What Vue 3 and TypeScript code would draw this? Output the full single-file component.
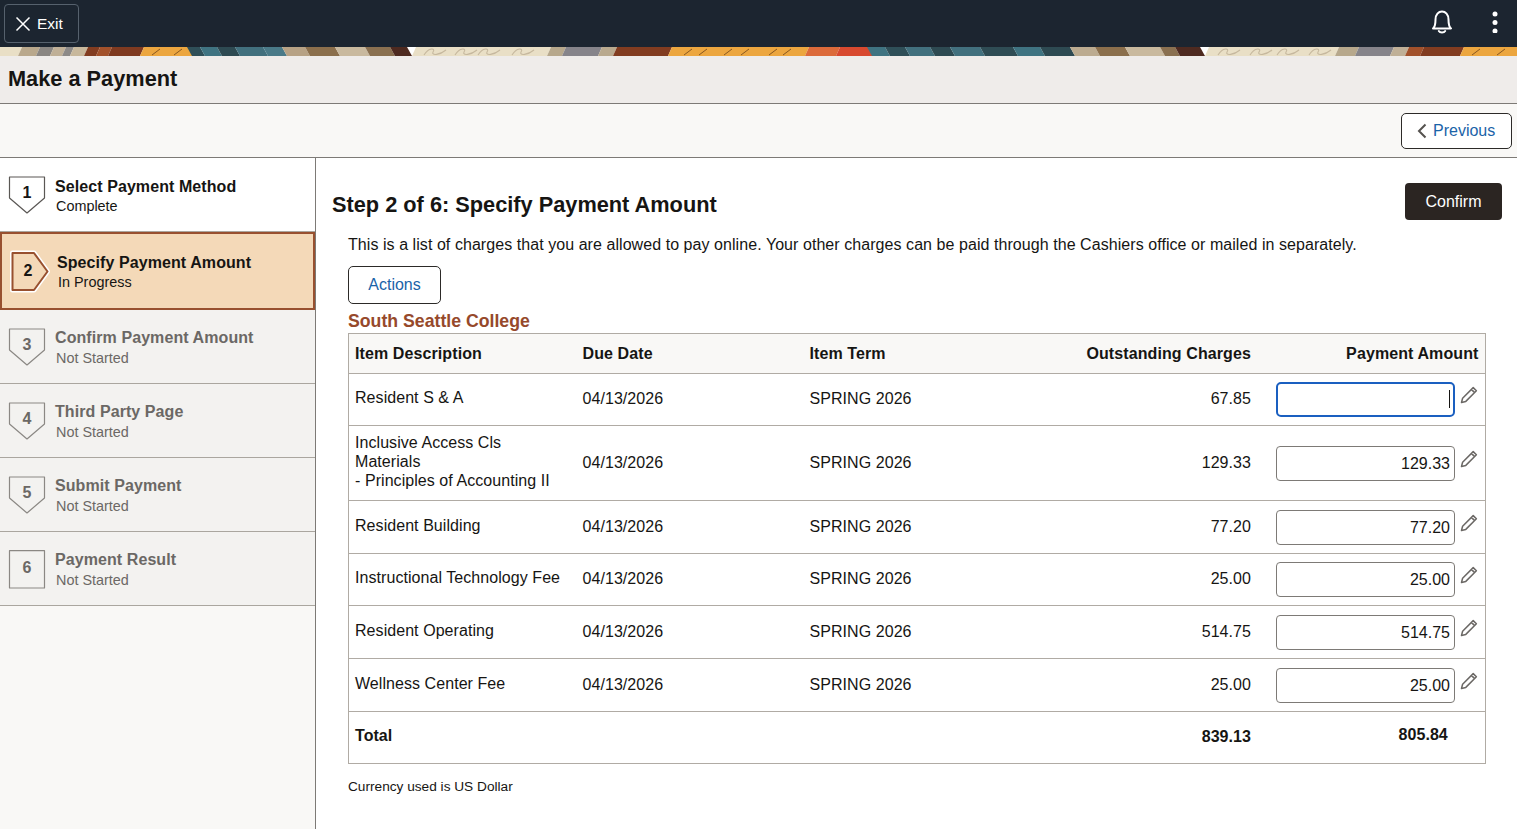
<script setup lang="ts">
interface Step {
  num: number;
  title: string;
  status: string;
  state: 'done' | 'active' | 'todo';
}

interface Charge {
  desc: string[];
  amount: string;
  value: string;
  focused?: boolean;
  height: number;
}

const steps: Step[] = [
  { num: 1, title: 'Select Payment Method', status: 'Complete', state: 'done' },
  { num: 2, title: 'Specify Payment Amount', status: 'In Progress', state: 'active' },
  { num: 3, title: 'Confirm Payment Amount', status: 'Not Started', state: 'todo' },
  { num: 4, title: 'Third Party Page', status: 'Not Started', state: 'todo' },
  { num: 5, title: 'Submit Payment', status: 'Not Started', state: 'todo' },
  { num: 6, title: 'Payment Result', status: 'Not Started', state: 'todo' },
];

const charges: Charge[] = [
  { desc: ['Resident S & A'], amount: '67.85', value: '', focused: true, height: 52 },
  {
    desc: ['Inclusive Access Cls', 'Materials', '- Principles of Accounting II'],
    amount: '129.33',
    value: '129.33',
    height: 75,
  },
  { desc: ['Resident Building'], amount: '77.20', value: '77.20', height: 53 },
  { desc: ['Instructional Technology Fee'], amount: '25.00', value: '25.00', height: 52 },
  { desc: ['Resident Operating'], amount: '514.75', value: '514.75', height: 53 },
  { desc: ['Wellness Center Fee'], amount: '25.00', value: '25.00', height: 53 },
];

// banner strip: [start x, end x, colour]
const bannerBands: [number, number, string][] = [
  [-8, 18, '#e9dfc6'],
  [18, 36, '#b9a88c'],
  [36, 50, '#8a8682'],
  [50, 62, '#c0b097'],
  [62, 70, '#8d8a88'],
  [70, 84, '#c8b89c'],
  [84, 96, '#823c20'],
  [96, 108, '#a2512b'],
  [108, 140, '#7f3a20'],
  [140, 195, '#eca63f'],
  [192, 205, '#2f4f58'],
  [205, 222, '#3f7381'],
  [222, 240, '#2e4a52'],
  [240, 268, '#42707e'],
  [268, 287, '#4a7a88'],
  [287, 310, '#b7a285'],
  [310, 340, '#8b6f4c'],
  [340, 370, '#c9b99e'],
  [370, 395, '#8a7050'],
  [395, 412, '#4e2a20'],
  [412, 547, '#e9dfc6'],
  [547, 562, '#b7a88c'],
  [562, 598, '#86848a'],
  [598, 613, '#b9a98e'],
  [613, 668, '#823c20'],
  [668, 805, '#eca63f'],
  [805, 836, '#dc6a3a'],
  [836, 875, '#d8492f'],
  [872, 890, '#3f7381'],
  [890, 910, '#2f4f58'],
  [910, 935, '#42707e'],
  [935, 955, '#2e4a52'],
  [955, 985, '#42707e'],
  [985, 1018, '#2f4c54'],
  [1018, 1045, '#3f7381'],
  [1045, 1075, '#2e4a52'],
  [1075, 1100, '#bcab90'],
  [1100, 1130, '#8b6f4c'],
  [1130, 1165, '#c9b99e'],
  [1165, 1180, '#8a7050'],
  [1180, 1205, '#4e2a20'],
  [1205, 1335, '#e9dfc6'],
  [1335, 1355, '#b7a88c'],
  [1355, 1390, '#86848a'],
  [1390, 1405, '#c0b097'],
  [1405, 1420, '#a2512b'],
  [1420, 1460, '#823c20'],
  [1460, 1525, '#eca63f'],
];

const squiggleStarts = [424, 455, 478, 512, 1218, 1250, 1277, 1309];
const tickStarts = [152, 174, 684, 699, 724, 741, 769, 783, 1472, 1497];

// the teal and tan runs lean the other way from the rust and orange ones
const bandPoints = (band: [number, number, string]) => {
  const [a, b] = band;
  const back = (a >= 192 && a < 412) || (a >= 872 && a < 1205);
  const lean = back ? -5 : 4;
  return `${a + lean},0 ${b + lean},0 ${b},9 ${a},9`;
};

const stepShape = (state: Step['state'], num: number) => {
  if (state === 'active') {
    return 'M3.5 3H25L38.5 21.5L25 40H3.5Z';
  }
  if (num === 6) {
    return 'M1.5 1.7H36.5V39H1.5Z';
  }
  return 'M1.5 2H36.5V23L19 38L1.5 23Z';
};

const numberY = (state: Step['state'], num: number) => {
  if (state === 'active') return 22;
  return num === 6 ? 20 : 19;
};
</script>

<template>
  <div class="page">
    <header class="topbar">
      <button class="exit-btn" type="button">
        <svg width="16" height="16" viewBox="0 0 16 16" fill="none">
          <path d="M1.5 1.5L14.5 14.5M14.5 1.5L1.5 14.5" stroke="#fff" stroke-width="1.5" />
        </svg>
        Exit
      </button>
      <div class="topbar-icons">
        <svg class="bell" width="20" height="24" viewBox="0 0 20 24" fill="none">
          <path
            d="M1 18.5C3.5 16.5 3.5 13.5 3.5 9.5C3.5 4.5 6.5 1.5 10 1.5C13.5 1.5 16.5 4.5 16.5 9.5C16.5 13.5 16.5 16.5 19 18.5Z"
            stroke="#fff"
            stroke-width="2"
            stroke-linejoin="round"
          />
          <path d="M6.8 21C8 23 12 23 13.2 21" stroke="#fff" stroke-width="2" stroke-linecap="round" />
        </svg>
        <svg class="kebab" width="6" height="22" viewBox="0 0 6 22" fill="#fff">
          <circle cx="3" cy="3" r="2.5" />
          <circle cx="3" cy="11.5" r="2.5" />
          <circle cx="3" cy="20" r="2.5" />
        </svg>
      </div>
    </header>

    <svg class="banner" viewBox="0 0 1517 9" preserveAspectRatio="none" aria-hidden="true">
      <polygon v-for="band in bannerBands" :key="band[0]" :points="bandPoints(band)" :fill="band[2]" />
      <path
        v-for="x in squiggleStarts"
        :key="'s' + x"
        :d="`M${x} 8C${x + 5} 0 ${x + 12} 1 ${x + 9} 5C${x + 7} 9 ${x + 16} 8 ${x + 22} 3`"
        fill="none"
        stroke="#c6b89e"
        stroke-width="1.1"
      />
      <path
        v-for="x in tickStarts"
        :key="'t' + x"
        :d="`M${x} 8L${x + 8} 2`"
        stroke="#7d4f1e"
        stroke-width="0.9"
      />
    </svg>

    <div class="title-bar">
      <h1>Make a Payment</h1>
    </div>

    <div class="toolbar">
      <button class="btn prev-btn" type="button">
        <svg width="10" height="16" viewBox="0 0 10 16" fill="none">
          <path d="M8.5 1.5L2 8L8.5 14.5" stroke="#55524f" stroke-width="2" />
        </svg>
        Previous
      </button>
    </div>

    <div class="body">
      <nav class="steps">
        <div v-for="step in steps" :key="step.num" class="step" :class="'step--' + step.state">
          <svg class="step-icon" width="40" height="40" viewBox="0 0 40 40">
            <path
              v-if="step.state === 'active'"
              :d="stepShape(step.state, step.num)"
              fill="none"
              stroke="#fff"
              stroke-width="5"
              stroke-linejoin="round"
            />
            <path
              :d="stepShape(step.state, step.num)"
              class="step-shape"
              stroke-linejoin="round"
            />
            <text
              x="19"
              :y="numberY(step.state, step.num)"
              class="step-num"
              text-anchor="middle"
              dominant-baseline="middle"
            >{{ step.num }}</text>
          </svg>
          <div class="step-text">
            <div class="step-title">{{ step.title }}</div>
            <div class="step-status">{{ step.status }}</div>
          </div>
        </div>
      </nav>

      <main class="content">
        <div class="content-head">
          <h2>Step 2 of 6: Specify Payment Amount</h2>
          <button class="confirm-btn" type="button">Confirm</button>
        </div>
        <div class="inner">
          <p class="intro">
            This is a list of charges that you are allowed to pay online. Your other charges can be paid through the
            Cashiers office or mailed in separately.
          </p>
          <button class="btn actions-btn" type="button">Actions</button>
          <h3>South Seattle College</h3>
          <table class="charges">
            <colgroup>
              <col style="width: 227px" />
              <col style="width: 227px" />
              <col style="width: 227px" />
              <col style="width: 228px" />
              <col />
            </colgroup>
            <thead>
              <tr>
                <th>Item Description</th>
                <th>Due Date</th>
                <th>Item Term</th>
                <th class="num">Outstanding Charges</th>
                <th class="num">Payment Amount</th>
              </tr>
            </thead>
            <tbody>
              <tr v-for="row in charges" :key="row.desc[0]" :style="{ height: row.height + 'px' }">
                <td class="desc">
                  <div v-for="line in row.desc" :key="line">{{ line }}</div>
                </td>
                <td>04/13/2026</td>
                <td>SPRING 2026</td>
                <td class="num">{{ row.amount }}</td>
                <td class="pay">
                  <div class="pay-wrap">
                    <div class="input-wrap">
                      <input
                        class="pay-input"
                        :class="{ 'is-focused': row.focused }"
                        type="text"
                        :value="row.value"
                        :aria-label="'Payment amount for ' + row.desc[0]"
                      />
                      <span v-if="row.focused" class="caret"></span>
                    </div>
                    <svg class="pencil" width="18" height="18" viewBox="0 0 18 18" fill="none">
                      <path
                        d="M1.5 16.5L2.6 12.2L13.2 1.6L16.4 4.8L5.8 15.4Z M11.4 3.4L14.6 6.6"
                        stroke="#6b6865"
                        stroke-width="1.5"
                        stroke-linejoin="round"
                      />
                    </svg>
                  </div>
                </td>
              </tr>
              <tr class="total">
                <td>Total</td>
                <td></td>
                <td></td>
                <td class="num total-charges">839.13</td>
                <td class="total-pay">805.84</td>
              </tr>
            </tbody>
          </table>
          <p class="currency">Currency used is US Dollar</p>
        </div>
      </main>
    </div>
  </div>
</template>

<style>
html,
body {
  margin: 0;
  background: #fff;
}
</style>

<style scoped>
.page {
  display: flex;
  flex-direction: column;
  height: 829px;
  overflow: hidden;
  font-family: 'Liberation Sans', Arial, sans-serif;
  font-size: 16px;
  color: #161513;
}

.topbar {
  display: flex;
  flex: none;
  align-items: center;
  justify-content: space-between;
  height: 47px;
  box-sizing: border-box;
  padding: 0 19px 3px 4px;
  background: #1c2530;
}

.exit-btn {
  display: flex;
  align-items: center;
  gap: 6px;
  width: 75px;
  height: 39px;
  box-sizing: border-box;
  padding: 0 0 0 10px;
  margin-top: 3px;
  border: 1px solid #56616d;
  border-radius: 4px;
  background: transparent;
  color: #fff;
  font: inherit;
  font-size: 15.5px;
}

.topbar-icons {
  display: flex;
  align-items: center;
  gap: 40px;
}

.banner {
  display: block;
  flex: none;
  width: 100%;
  height: 9px;
}

.title-bar {
  flex: none;
  height: 48px;
  box-sizing: border-box;
  padding: 9px 8px 0;
  border-bottom: 1px solid #7d7a76;
  background: #efecea;
}

h1 {
  margin: 0;
  font-size: 21.75px;
  line-height: 27px;
}

.toolbar {
  display: flex;
  flex: none;
  justify-content: flex-end;
  height: 54px;
  box-sizing: border-box;
  padding: 9px 5px 0 0;
  border-bottom: 1px solid #7d7a76;
  background: #f9f8f6;
}

.btn {
  border: 1px solid #2c2a28;
  border-radius: 5px;
  background: #fff;
  color: #1a63a8;
  font: inherit;
}

.prev-btn {
  display: flex;
  align-items: center;
  gap: 6px;
  width: 111px;
  height: 36px;
  padding: 0 0 0 15px;
}

.body {
  display: flex;
  flex: 1;
  min-height: 0;
}

.steps {
  flex: none;
  width: 316px;
  box-sizing: border-box;
  border-right: 1px solid #7d7a76;
  background: #f9f8f6;
}

.step {
  display: flex;
  align-items: flex-start;
  gap: 7px;
  height: 74px;
  box-sizing: border-box;
  padding: 17px 0 0 8px;
  border-bottom: 1px solid #aaa69f;
  background: #f3f2f0;
}

.step-icon {
  flex: none;
  overflow: visible;
}

.step-shape {
  fill: none;
  stroke: #8b8884;
  stroke-width: 1.2;
}

.step-num {
  fill: #6b6865;
  font-size: 16px;
  font-weight: 700;
}

.step-title {
  font-weight: 700;
  line-height: 22px;
  letter-spacing: 0.08px;
  color: #6b6865;
}

.step-status {
  margin-left: 1px;
  font-size: 14.4px;
  line-height: 18px;
  color: #6b6865;
}

.step--done {
  background: #fff;
}

.step--done .step-shape {
  fill: #fff;
  stroke: #5a5754;
}

.step--done .step-num,
.step--active .step-num {
  fill: #161513;
}

.step--done .step-title,
.step--done .step-status,
.step--active .step-title,
.step--active .step-status {
  color: #161513;
}

.step--done .step-text {
  margin-top: 1px;
}

.step--done .step-title {
  line-height: 21px;
}

.step--active {
  height: 78px;
  padding: 16px 0 0 7px;
  border: 2px solid #98502f;
  background: #f4d9b8;
  gap: 8px;
}

.step--active .step-text {
  margin-top: 2px;
}

.step--active .step-title {
  line-height: 21px;
}

.step--active .step-shape {
  fill: #f4d9b8;
  stroke: #98502f;
  stroke-width: 2;
}

.content {
  flex: 1;
  min-width: 0;
  padding-left: 16px;
}

.content-head {
  display: flex;
  align-items: flex-start;
  justify-content: space-between;
  padding: 25px 15px 0 0;
}

h2 {
  margin: 8px 0 0;
  font-size: 21.75px;
  line-height: 27px;
}

.confirm-btn {
  width: 97px;
  height: 37px;
  border: none;
  border-radius: 4px;
  background: #2b2522;
  color: #fff;
  font: inherit;
}

.inner {
  padding-left: 16px;
}

.intro {
  margin: 14px 0 0;
  line-height: 22px;
  letter-spacing: 0.06px;
}

.actions-btn {
  display: block;
  width: 93px;
  height: 38px;
  margin-top: 10px;
}

h3 {
  margin: 6px 0 0;
  font-size: 17.7px;
  line-height: 23px;
  color: #96492b;
}

.charges {
  width: 1138px;
  border: 1px solid #b0aba4;
  border-collapse: collapse;
  table-layout: fixed;
}

.charges th,
.charges td {
  padding: 0 7px;
  text-align: left;
  font-weight: 400;
  line-height: 21px;
  border-bottom: 1px solid #b0aba4;
}

.charges td {
  padding-bottom: 2px;
  letter-spacing: 0.06px;
}

.charges th:first-child,
.charges td:first-child {
  padding-left: 6px;
}

.charges th {
  height: 39px;
  background: #f9f8f6;
  font-weight: 700;
  letter-spacing: 0.1px;
}

.charges .num {
  padding-right: 6.5px;
  text-align: right;
}

.charges .desc div {
  position: relative;
  top: -1px;
  line-height: 19px;
}

.charges .pay {
  padding: 0 6px 0 18px;
}

.pay-wrap {
  display: flex;
  align-items: flex-start;
  gap: 5px;
}

.input-wrap {
  position: relative;
  flex: none;
  width: 179px;
  height: 35px;
}

.pay-input {
  width: 100%;
  height: 100%;
  box-sizing: border-box;
  padding: 1px 3.5px 0 0;
  border: 1px solid #7d7a76;
  border-radius: 4px;
  background: #fff;
  color: #161513;
  font: inherit;
  text-align: right;
  outline: none;
}

.pay-input.is-focused {
  border: 2px solid #1a5fc0;
  border-radius: 5px;
}

.caret {
  position: absolute;
  top: 8px;
  right: 5px;
  width: 1px;
  height: 18px;
  background: #161513;
}

.pencil {
  flex: none;
  margin-top: 4px;
}

.charges .total td {
  height: 46px;
  padding-bottom: 5px;
  font-weight: 700;
  border-bottom: none;
}

.total-charges {
  position: relative;
  top: 1px;
}

.charges .total-pay {
  padding-left: 141px;
  position: relative;
  top: -1px;
}

.currency {
  margin: 14px 0 0;
  font-size: 13.67px;
  line-height: 18px;
}
</style>
